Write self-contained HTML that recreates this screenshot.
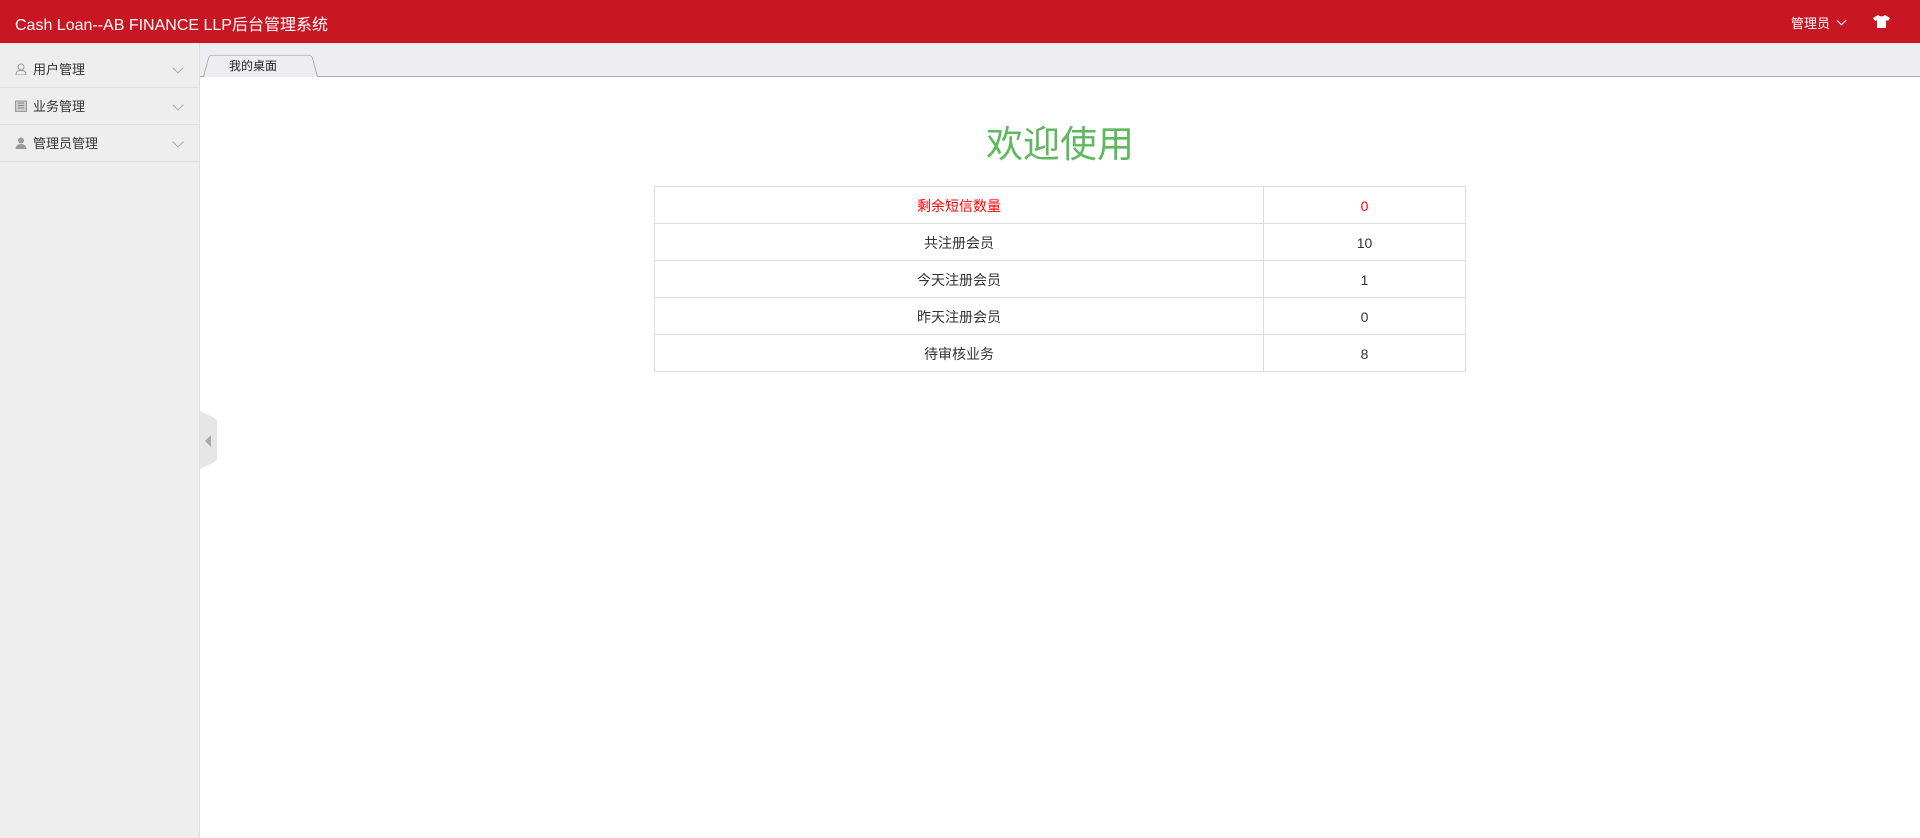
<!DOCTYPE html>
<html><head><meta charset="utf-8"><style>
*{margin:0;padding:0;box-sizing:border-box}
body{width:1920px;height:838px;overflow:hidden;background:#fff;font-family:"Liberation Sans","Noto Sans CJK SC",sans-serif;font-size:13px;color:#333;position:relative}
.hd{position:absolute;left:0;top:0;width:1920px;height:43px;background:#c81623;color:#fff}
.hd .t{position:absolute;left:15px;top:11px;font-size:16px}
.hd .u{position:absolute;left:1791px;top:13px;font-size:13px}
.sb{position:absolute;left:0;top:43px;width:200px;height:795px;background:#eee;border-right:1px solid #ddd;padding-top:8px}
.it{height:37px;border-bottom:1px solid #e0e0e0;position:relative;line-height:37px;padding-left:33px;font-size:13px;color:#333}
.it .ic{position:absolute;left:15px;top:12px;width:12px;height:12px}
.it .ar{position:absolute;right:17px;top:13px;width:8px;height:8px;border-right:1px solid #aaa;border-bottom:1px solid #aaa;transform:rotate(45deg)}
.tb{position:absolute;left:200px;top:43px;width:1720px;height:34px;background:#eeeef0;border-bottom:1px solid #aaa}
.tab{position:absolute;left:3px;top:9px;width:115px;height:25px;background:#eeeef0;border:1px solid #aaa;border-bottom:none;border-radius:4px 4px 0 0;transform:perspective(30px) rotateX(8deg);transform-origin:bottom}
.tabt{position:absolute;left:229px;top:57px;font-size:12px;color:#222}
h1{position:absolute;left:200px;width:1720px;top:114px;text-align:center;font-weight:normal;font-size:37px;color:#5eb95e}
table{position:absolute;left:654px;top:186px;width:812px;border-collapse:collapse}
td{border:1px solid #ddd;height:37px;text-align:center;font-size:14px;color:#333;padding-top:2px}
.r td{color:#f00}
.hdl{position:absolute;left:200px;top:411px;width:17px;height:58px;background:#e6e6e6;clip-path:polygon(0 0,60% 8%,100% 15%,100% 85%,60% 92%,0 100%)}
.hdl:after{content:"";position:absolute;left:5px;top:24px;border-right:6px solid #aaa;border-top:6px solid transparent;border-bottom:6px solid transparent}
</style></head><body>
<div class="hd"><div class="t">Cash Loan--AB FINANCE LLP后台管理系统</div>
<div class="u">管理员 <span style="display:inline-block;width:7px;height:7px;border-right:1.5px solid #fff;border-bottom:1.5px solid #fff;transform:rotate(45deg);margin:0 0 4px 4px"></span></div>
<svg style="position:absolute;left:1873px;top:15px" width="17" height="13" viewBox="0 0 17 13"><path d="M5 0 L0 3 L2 6 L4 5 L4 13 L13 13 L13 5 L15 6 L17 3 L12 0 Q8.5 3 5 0Z" fill="#fff"/></svg>
</div>
<div class="sb">
<div class="it"><svg class="ic" viewBox="0 0 12 12"><circle cx="6" cy="4" r="3" fill="none" stroke="#999"/><path d="M1 12 Q1 7 6 7.5 Q11 7 11 12Z" fill="none" stroke="#999"/></svg>用户管理<span class="ar"></span></div>
<div class="it"><svg class="ic" viewBox="0 0 12 12"><rect x="0.5" y="1" width="11" height="10.5" fill="#ccc" stroke="#999"/><path d="M3 3h6M3 5.5h6M3 8h6" stroke="#888"/></svg>业务管理<span class="ar"></span></div>
<div class="it"><svg class="ic" viewBox="0 0 12 12"><circle cx="6" cy="3.5" r="3" fill="#999"/><path d="M0.5 12 Q1 7 6 7 Q11 7 11.5 12Z" fill="#999"/></svg>管理员管理<span class="ar"></span></div>
</div>
<div class="tb"><div class="tab"></div></div>
<div class="tabt">我的桌面</div>
<h1>欢迎使用</h1>
<table>
<tr class="r"><td style="width:609px">剩余短信数量</td><td>0</td></tr>
<tr><td>共注册会员</td><td>10</td></tr>
<tr><td>今天注册会员</td><td>1</td></tr>
<tr><td>昨天注册会员</td><td>0</td></tr>
<tr><td>待审核业务</td><td>8</td></tr>
</table>
<div class="hdl"></div>
</body></html>
